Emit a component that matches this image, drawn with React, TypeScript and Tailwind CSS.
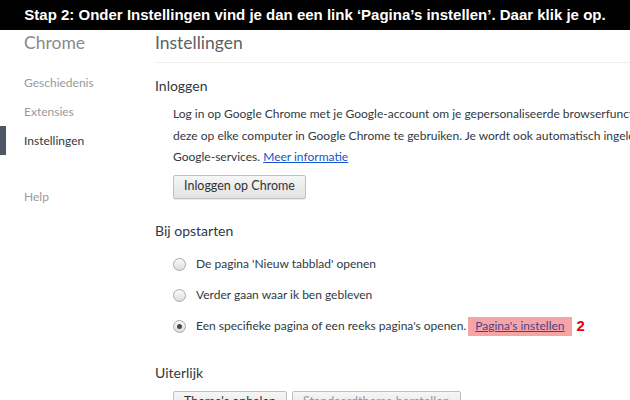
const ui = { fontFamily: 'Lato, "Open Sans", "Liberation Sans", sans-serif' };

function Radio({ checked }: { checked?: boolean }) {
  return (
    <span className="w-[13px] h-[13px] rounded-full border border-[#a9a9a9] bg-gradient-to-b from-[#fafafa] to-[#dedede] flex items-center justify-center shrink-0">
      {checked && <span className="w-[5px] h-[5px] rounded-full bg-[#4a4a4a]" />}
    </span>
  );
}

function Btn({ children, className = '' }: { children: React.ReactNode; className?: string }) {
  return (
    <button
      className={
        'h-[24px] px-[10px] rounded-[2px] border border-[#c0c0c0] bg-gradient-to-b from-[#f6f6f6] to-[#e2e2e2] text-[12.5px] text-[#333] shadow-[0_1px_0_rgba(0,0,0,0.08)] ' +
        className
      }
    >
      {children}
    </button>
  );
}

export default function App() {
  return (
    <div className="w-[630px] h-[400px] overflow-hidden bg-white flex flex-col" style={ui}>
      {/* caption */}
      <div
        className="h-[30px] bg-black text-white font-bold text-[15px] flex items-center justify-center shrink-0"
        style={{ fontFamily: '"Liberation Sans", Arial, sans-serif' }}
      >
        Stap 2: Onder Instellingen vind je dan een link ‘Pagina’s instellen’. Daar klik je op.
      </div>

      <div className="flex flex-1">
        {/* sidebar */}
        <aside className="w-[155px] shrink-0 flex flex-col">
          <div className="h-[33px] pl-[24px] pt-[1px] text-[17.5px] text-[#8a8a8a] leading-[24px]">Chrome</div>
          <nav className="flex flex-col text-[12px] mt-[5px]">
            <div className="h-[29px] pl-[24px] flex items-center text-[#999]">Geschiedenis</div>
            <div className="h-[29px] pl-[24px] flex items-center text-[#999]">Extensies</div>
            <div className="h-[29px] flex items-center text-[#303942]">
              <span className="w-[6px] h-full bg-[#4e5764] mr-[18px]" />
              Instellingen
            </div>
            <div className="h-[29px] pl-[24px] mt-[27px] flex items-center text-[#999]">Help</div>
          </nav>
        </aside>

        {/* main */}
        <main className="flex-1 flex flex-col text-[#303942] min-w-0">
          <div className="h-[33px] pt-[1px] text-[17.5px] text-[#5c6166] leading-[24px] border-b border-[#eee]">
            Instellingen
          </div>

          <section className="mt-[12px]">
            <h3 className="text-[14px] leading-[22px]">Inloggen</h3>
            <div className="pl-[18px] mt-[6px]">
              <p className="text-[12px] leading-[21.5px] whitespace-nowrap">
                Log in op Google Chrome met je Google-account om je gepersonaliseerde browserfuncties op te slaan en open
                <br />
                deze op elke computer in Google Chrome te gebruiken. Je wordt ook automatisch ingelogd bij je favoriete
                <br />
                Google-services. <a className="text-[#15c] underline">Meer informatie</a>
              </p>
              <Btn className="mt-[7px]">Inloggen op Chrome</Btn>
            </div>
          </section>

          <section className="mt-[21px]">
            <h3 className="text-[14px] leading-[22px]">Bij opstarten</h3>
            <div className="pl-[18px] mt-[12px] flex flex-col gap-[10px] text-[12px]">
              <label className="flex items-center gap-[10px] h-[21px]">
                <Radio />
                De pagina 'Nieuw tabblad' openen
              </label>
              <label className="flex items-center gap-[10px] h-[21px]">
                <Radio />
                Verder gaan waar ik ben gebleven
              </label>
              <label className="flex items-center gap-[10px] h-[21px] whitespace-nowrap">
                <Radio checked />
                <span>Een specifieke pagina of een reeks pagina's openen.</span>
                <span className="flex items-center -ml-[8px]">
                  <span className="bg-[#f6a5a7] px-[7px] h-[19px] flex items-center">
                    <a className="text-[#4d3f8f] underline">Pagina's instellen</a>
                  </span>
                  <span
                    className="ml-[5px] text-[#e00] font-bold text-[15px]"
                    style={{ fontFamily: '"Liberation Sans", Arial, sans-serif' }}
                  >
                    2
                  </span>
                </span>
              </label>
            </div>
          </section>

          <section className="mt-[25px]">
            <h3 className="text-[14px] leading-[22px]">Uiterlijk</h3>
            <div className="pl-[18px] mt-[7px] flex gap-[5px]">
              <Btn>Thema's ophalen</Btn>
              <Btn className="text-[#999]">Standaardthema herstellen</Btn>
            </div>
          </section>
        </main>
      </div>
    </div>
  );
}
